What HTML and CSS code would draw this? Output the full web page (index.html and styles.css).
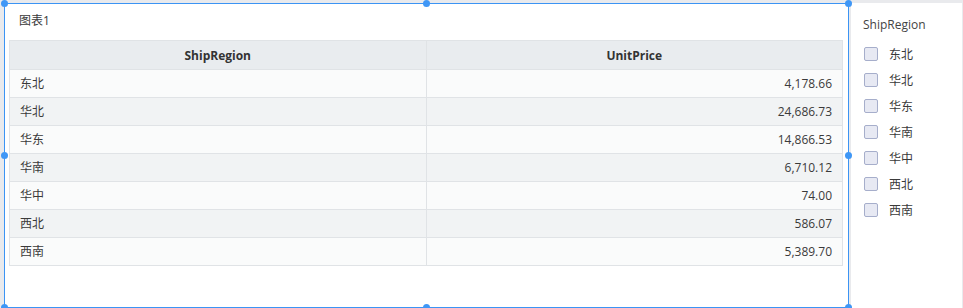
FILE: index.html
```html
<!DOCTYPE html>
<html lang="zh">
<head>
<meta charset="utf-8">
<title>图表1</title>
<link rel="stylesheet" href="styles.css">
</head>
<body>
<div class="page">
  <div class="chart">
    <span class="handle h-tl"></span>
    <span class="handle h-tm"></span>
    <span class="handle h-tr"></span>
    <span class="handle h-ml"></span>
    <span class="handle h-mr"></span>
    <span class="handle h-bl"></span>
    <span class="handle h-bm"></span>
    <span class="handle h-br"></span>
    <div class="title">图表1</div>
    <table class="grid">
      <thead>
        <tr><th>ShipRegion</th><th>UnitPrice</th></tr>
      </thead>
      <tbody>
        <tr><td>东北</td><td class="num">4,178.66</td></tr>
        <tr><td>华北</td><td class="num">24,686.73</td></tr>
        <tr><td>华东</td><td class="num">14,866.53</td></tr>
        <tr><td>华南</td><td class="num">6,710.12</td></tr>
        <tr><td>华中</td><td class="num">74.00</td></tr>
        <tr><td>西北</td><td class="num">586.07</td></tr>
        <tr><td>西南</td><td class="num">5,389.70</td></tr>
      </tbody>
    </table>
  </div>
  <div class="filter">
    <div class="filter-title">ShipRegion</div>
    <ul class="options">
      <li><span class="box"></span><span>东北</span></li>
      <li><span class="box"></span><span>华北</span></li>
      <li><span class="box"></span><span>华东</span></li>
      <li><span class="box"></span><span>华南</span></li>
      <li><span class="box"></span><span>华中</span></li>
      <li><span class="box"></span><span>西北</span></li>
      <li><span class="box"></span><span>西南</span></li>
    </ul>
  </div>
</div>
</body>
</html>
```
FILE: styles.css
```css
html, body {
  margin: 0;
  padding: 0;
  background: #e9eaed;
  font-family: "Open Sans", "Noto Sans CJK SC", sans-serif;
  font-size: 12px;
  color: #3a3a3a;
  overflow: hidden;
}
.page {
  display: flex;
  align-items: flex-start;
  padding: 3px 0 0 4px;
  height: 308px;
  box-sizing: border-box;
}
.chart {
  position: relative;
  width: 845px;
  height: 305px;
  box-sizing: border-box;
  border: 1px solid #3b94f4;
  background: #fff;
  padding: 0 5px 0 4px;
}
.handle {
  position: absolute;
  width: 7px;
  height: 7px;
  border-radius: 50%;
  background: #3f97f6;
}
.h-tl { left: -4px; top: -4px; }
.h-tm { left: 418px; top: -4px; }
.h-tr { right: -4px; top: -4px; }
.h-ml { left: -4px; top: 148px; }
.h-mr { right: -4px; top: 148px; }
.h-bl { left: -4px; bottom: -4px; }
.h-bm { left: 418px; bottom: -4px; }
.h-br { right: -4px; bottom: -4px; }
.title {
  height: 36px;
  line-height: 34px;
  padding-left: 10px;
}
.grid {
  width: 834px;
  border-collapse: collapse;
  table-layout: fixed;
}
.grid th, .grid td {
  border: 1px solid #e0e3e6;
  padding: 1px 10px 0;
  height: 26px;
  line-height: 16px;
}
.grid th {
  background: #e9ecef;
  font-weight: 700;
  color: #333;
  padding-top: 2px;
  text-align: center;
}
.grid tbody tr:nth-child(odd) td { background: #fafbfb; }
.grid tbody tr:nth-child(even) td { background: #f1f3f4; }
.grid td.num { text-align: right; }
.filter {
  margin-left: 2px;
  width: 111px;
  height: 305px;
  background: #fff;
  padding: 14px 0 0 12px;
  box-sizing: border-box;
}
.filter-title {
  line-height: 16px;
  color: #444;
  margin-bottom: 14px;
}
.options {
  list-style: none;
  margin: 0;
  padding: 0 0 0 1px;
}
.options li {
  display: flex;
  align-items: center;
  height: 26px;
  margin-top: -6px;
  margin-bottom: 6px;
}
.box {
  width: 12px;
  height: 12px;
  border: 1px solid #a6aecb;
  border-radius: 2px;
  background: #e7e9f3;
  margin-right: 11px;
}
```
